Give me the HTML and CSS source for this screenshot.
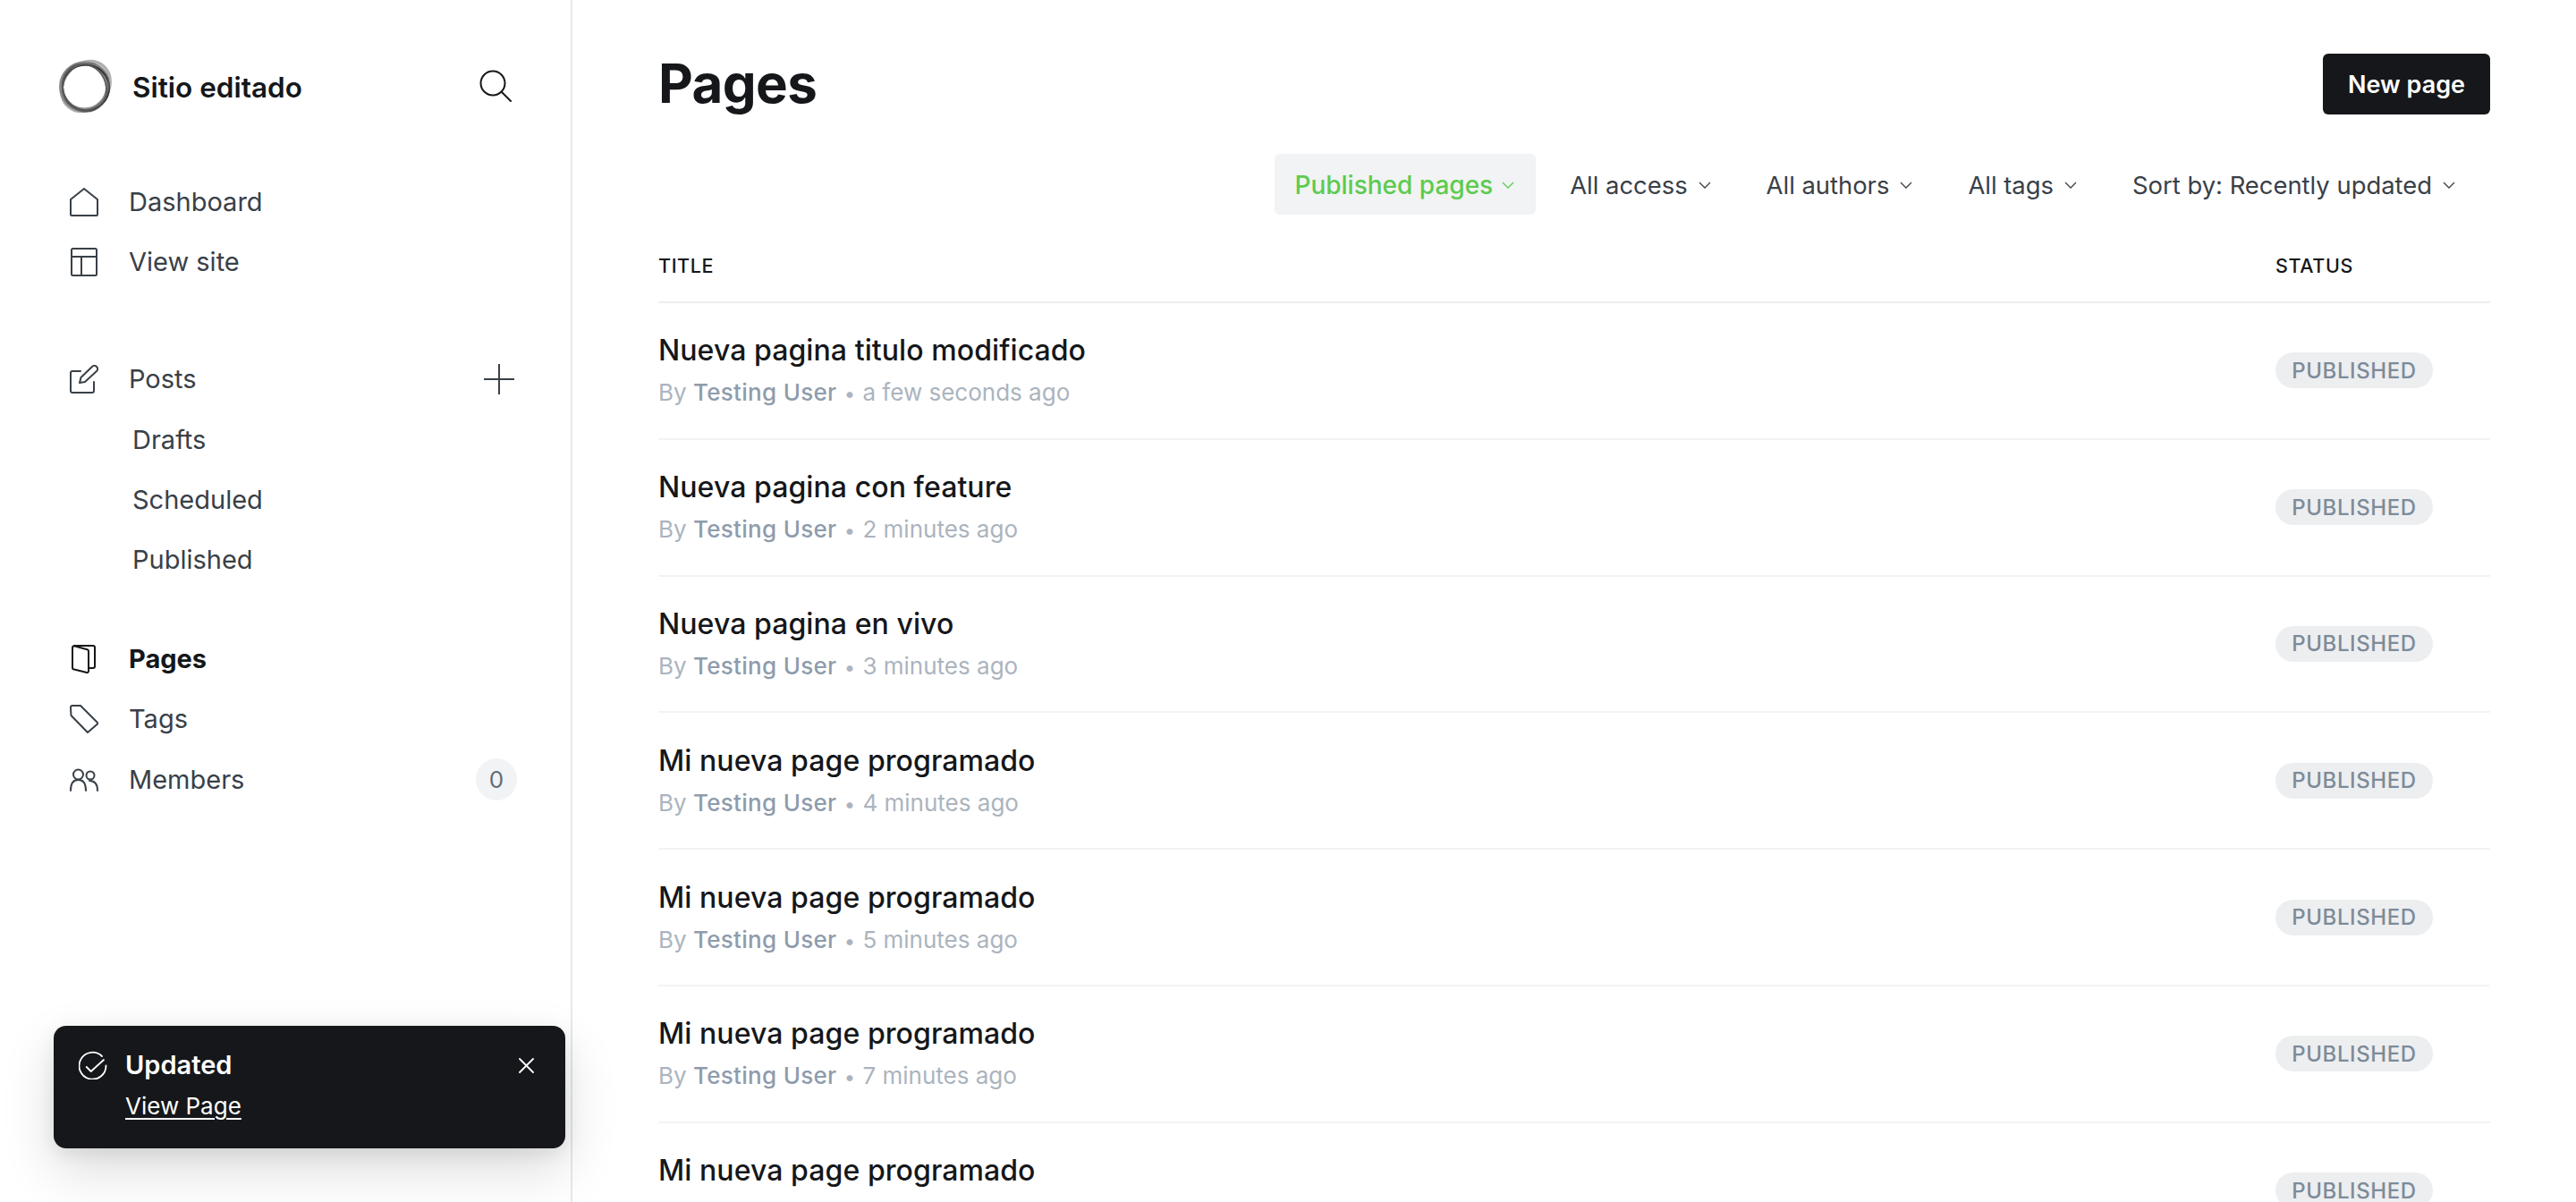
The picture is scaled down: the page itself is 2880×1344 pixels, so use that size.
FILE: index.html
```html
<!DOCTYPE html>
<html lang="en">
<head>
<meta charset="utf-8">
<title>Pages</title>
<link rel="stylesheet" href="styles.css">
</head>
<body>
<div class="app">
  <aside class="sidebar">
    <div class="brand">
      <svg class="logo" viewBox="0 0 60 60" fill="none"><ellipse cx="31" cy="30.500" rx="30" ry="25" stroke-width="3.500" stroke="#b0b0b0" transform="rotate(-50 31 30.500)"/><circle cx="29.500" cy="31" r="26" stroke-width="5" stroke="#8a8a8a"/><ellipse cx="31" cy="32" rx="26" ry="25.500" stroke-width="2" stroke="#333"/><ellipse cx="29.500" cy="32" rx="27" ry="24" stroke-width="2" stroke="#555" opacity=".85" transform="rotate(65 29.500 32)"/><ellipse cx="31" cy="31" rx="27.500" ry="24.500" stroke-width="1.500" stroke="#666" opacity=".7" transform="rotate(-50 31 31)"/></svg>
      <span class="brand-name">Sitio editado</span>
      <svg class="search" viewBox="0 0 36 36" fill="none" stroke="#15171a" stroke-width="2" stroke-linecap="round"><circle cx="15" cy="15" r="13.500"/><path d="M25 25l10 10"/></svg>
    </div>
    <nav class="nav nav-first">
      <a class="item"><svg class="ico" viewBox="0 0 32 32" fill="none" stroke="#394047" stroke-width="2" stroke-linejoin="round"><path d="M1 13L16 1l15 12v17a1 1 0 0 1-1 1H2a1 1 0 0 1-1-1z"/></svg>Dashboard</a>
      <a class="item"><svg class="ico" viewBox="0 0 32 32" fill="none" stroke="#394047" stroke-width="2" stroke-linejoin="round"><rect x="2" y="1" width="28" height="30" rx="1.500"/><path d="M2 10h28M13 10v21"/></svg>View site</a>
    </nav>
    <nav class="nav">
      <div class="item"><svg class="ico" viewBox="0 0 32 32" fill="none" stroke="#394047" stroke-width="2" stroke-linejoin="round" stroke-linecap="round"><path d="M12 7H3a2 2 0 0 0-2 2v20a2 2 0 0 0 2 2h22a2 2 0 0 0 2-2V19"/><path d="M11 20l1.500-6L25 2c1.500-1.500 3.500-1.500 5 0s1.500 3.500 0 5L17 19z"/></svg>Posts<svg class="plus" viewBox="0 0 34 34" fill="none" stroke="#394047" stroke-width="2" stroke-linecap="round"><path d="M17 0v34M0 17h34"/></svg></div>
      <a class="item sub">Drafts</a>
      <a class="item sub">Scheduled</a>
      <a class="item sub">Published</a>
    </nav>
    <nav class="nav nav-last">
      <a class="item current"><svg class="ico" viewBox="0 0 32 32" fill="none" stroke="#15171a" stroke-width="2" stroke-linejoin="round" stroke-linecap="round"><path d="M5 1h21a2 2 0 0 1 2 2v21a2 2 0 0 1-2 2h-5"/><path d="M5 1.200l14.500 4a2 2 0 0 1 1.500 2v22.300a1.500 1.500 0 0 1-2 1.500L5 27.500a2 2 0 0 1-2-2V3a2 2 0 0 1 2-1.800z"/></svg>Pages</a>
      <a class="item"><svg class="ico" viewBox="0 0 32 32" fill="none" stroke="#394047" stroke-width="2" stroke-linejoin="round"><path d="M1 3a2 2 0 0 1 2-2h9l19 19a1 1 0 0 1 0 1.500L20 31 1.500 12z"/></svg>Tags</a>
      <a class="item item-members"><svg class="ico" viewBox="0 0 32 32" fill="none" stroke="#394047" stroke-width="2" stroke-linecap="round"><circle cx="9.500" cy="10" r="5.500"/><path d="M1 28c0-8 3-12 8.500-12s8.500 4 8.500 12"/><circle cx="23" cy="11" r="4.500"/><path d="M22 17c6 0 9 4 9 11"/></svg>Members<span class="count">0</span></a>
    </nav>
  </aside>
  <main class="main">
    <header class="top">
      <h1 class="title">Pages</h1>
      <button class="new">New page</button>
    </header>
    <div class="filters">
      <button class="filter active">Published pages<svg class="chev" viewBox="0 0 14 8" fill="none" stroke="currentColor" stroke-width="1.300"><path d="M1 1l6 6 6-6"/></svg></button>
      <button class="filter">All access<svg class="chev" viewBox="0 0 14 8" fill="none" stroke="currentColor" stroke-width="1.300"><path d="M1 1l6 6 6-6"/></svg></button>
      <button class="filter">All authors<svg class="chev" viewBox="0 0 14 8" fill="none" stroke="currentColor" stroke-width="1.300"><path d="M1 1l6 6 6-6"/></svg></button>
      <button class="filter">All tags<svg class="chev" viewBox="0 0 14 8" fill="none" stroke="currentColor" stroke-width="1.300"><path d="M1 1l6 6 6-6"/></svg></button>
      <button class="filter">Sort by: Recently updated<svg class="chev" viewBox="0 0 14 8" fill="none" stroke="currentColor" stroke-width="1.300"><path d="M1 1l6 6 6-6"/></svg></button>
    </div>
    <div class="thead"><span class="col-title">TITLE</span><span class="col-status">STATUS</span></div>
    <div class="row">
      <div class="col-title"><div class="row-title">Nueva pagina titulo modificado</div><div class="meta">By <b>Testing User</b> <i>•</i> a few seconds ago</div></div>
      <div class="col-status"><span class="badge">PUBLISHED</span></div>
    </div>
    <div class="row">
      <div class="col-title"><div class="row-title">Nueva pagina con feature</div><div class="meta">By <b>Testing User</b> <i>•</i> 2 minutes ago</div></div>
      <div class="col-status"><span class="badge">PUBLISHED</span></div>
    </div>
    <div class="row">
      <div class="col-title"><div class="row-title">Nueva pagina en vivo</div><div class="meta">By <b>Testing User</b> <i>•</i> 3 minutes ago</div></div>
      <div class="col-status"><span class="badge">PUBLISHED</span></div>
    </div>
    <div class="row">
      <div class="col-title"><div class="row-title">Mi nueva page programado</div><div class="meta">By <b>Testing User</b> <i>•</i> 4 minutes ago</div></div>
      <div class="col-status"><span class="badge">PUBLISHED</span></div>
    </div>
    <div class="row">
      <div class="col-title"><div class="row-title">Mi nueva page programado</div><div class="meta">By <b>Testing User</b> <i>•</i> 5 minutes ago</div></div>
      <div class="col-status"><span class="badge">PUBLISHED</span></div>
    </div>
    <div class="row">
      <div class="col-title"><div class="row-title">Mi nueva page programado</div><div class="meta">By <b>Testing User</b> <i>•</i> 7 minutes ago</div></div>
      <div class="col-status"><span class="badge">PUBLISHED</span></div>
    </div>
    <div class="row">
      <div class="col-title"><div class="row-title">Mi nueva page programado</div><div class="meta">By <b>Testing User</b> <i>•</i> 8 minutes ago</div></div>
      <div class="col-status"><span class="badge">PUBLISHED</span></div>
    </div>
  </main>
  <div class="toast">
    <svg class="toast-ico" viewBox="0 0 32 32" fill="none" stroke="#fff" stroke-width="1.800" stroke-linecap="round" stroke-linejoin="round"><path d="M26 6A15 15 0 1 0 30.500 16.500"/><path d="M8.700 18l5 5L28 10"/></svg>
    <div class="toast-body"><div class="toast-title">Updated</div><a class="toast-link">View Page</a></div>
    <svg class="toast-x" viewBox="0 0 17 17" fill="none" stroke="#fff" stroke-width="1.800" stroke-linecap="round"><path d="M1 1l15 15M16 1L1 16"/></svg>
  </div>
</div>
</body>
</html>
```

FILE: styles.css
```css
* { box-sizing: border-box; }
html, body { margin: 0; height: 100%; overflow: hidden; background: #fff; }
body { font-family: Inter, "Noto Sans", sans-serif; color: #15171a; }
.app { display: flex; height: 1344px; overflow: hidden; position: relative; }

.sidebar { width: 640px; flex: none; border-right: 2px solid #e6e8ea; padding: 66px 64px 0 65px; }
.brand { display: flex; align-items: center; height: 60px; }
.logo { width: 60px; height: 60px; flex: none; overflow: visible; }
.brand-name { margin-left: 23px; font-size: 31.500px; font-weight: 600; padding-top: 2px; }
.search { width: 36px; height: 36px; margin-left: auto; margin-right: 2px; }

.nav { margin-top: 44px; }
.nav-first { margin-top: 66px; }
.nav-first + .nav { margin-top: 64px; }
.nav-last { margin-top: 44px; }
.item { display: flex; align-items: center; height: 67px; font-size: 29px; color: #394047; padding-left: 13px; }
.item:not(.sub) + .sub { margin-top: 1px; }
.item-members { margin-top: 1px; }
.ico { width: 32px; height: 32px; flex: none; margin-right: 34px; }
.sub { padding-left: 83px; }
.current { font-weight: 700; color: #15171a; }
.plus { width: 34px; height: 34px; margin-left: auto; margin-right: -1px; }
.count { margin-left: auto; width: 46px; height: 47px; border-radius: 50%; background: #f1f3f4; font-size: 26px; color: #626d79; display: flex; align-items: center; justify-content: center; margin-right: -4px; }

.main { flex: 1; padding: 0 96px; min-width: 0; }
.top { display: flex; justify-content: space-between; align-items: flex-start; padding-top: 60px; height: 172px; }
.title { margin: 0; font-size: 60px; line-height: 66px; font-weight: 700; letter-spacing: -0.6px; }
.new { width: 187px; height: 68px; border: 0; border-radius: 6px; background: #15171a; color: #fff; font: 600 27px Inter, sans-serif; padding: 0; }

.filters { display: flex; justify-content: flex-end; gap: 14px; padding-right: 15px; }
.filter { height: 68px; border: 0; border-radius: 6px; background: transparent; color: #394047; font: 400 27.400px Inter, sans-serif; padding: 2px 24px 0; display: flex; align-items: center; }
.filter.active { background: #f1f3f4; color: #5dcb4f; font-weight: 500; font-size: 28px; padding-left: 22px; }
.filter.active .chev { margin-left: 10px; }
.chev { width: 14px; height: 8px; margin-left: 12px; }

.thead { display: flex; align-items: center; height: 99px; padding-top: 16px; border-bottom: 2px solid #ebeef0; font-size: 21.500px; letter-spacing: 0.6px; font-weight: 500; color: #15171a; }
.col-title { flex: 1; min-width: 0; }
.row .col-title { margin-top: -2px; }
.col-status { width: 240px; flex: none; }
.row { display: flex; align-items: center; height: 152.800px; border-bottom: 2px solid #f1f3f4; }
.row-title { font-size: 32px; line-height: 42px; font-weight: 500; letter-spacing: 0.08px; color: #15171a; padding-top: 2px; }
.meta { font-size: 26px; line-height: 34px; margin-top: 9px; color: #abb4be; }
.meta b { font-weight: 500; color: #8e9cac; letter-spacing: 0.3px; }
.meta i { font-style: normal; margin: 0 1px; font-size: 22px; }
.badge { display: inline-flex; align-items: center; height: 40px; width: 176px; justify-content: center; border-radius: 20px; background: #eceef0; color: #7c8b9a; font-size: 24px; font-weight: 500; letter-spacing: 0.6px; }

.toast { position: absolute; left: 60px; top: 1147px; width: 572px; height: 137px; border-radius: 14px; background: #15171a; color: #fff; box-shadow: 0 24px 60px rgba(0,0,0,.14), 0 6px 20px rgba(0,0,0,.08); display: flex; padding: 28px 35px 0 28px; }
.toast-ico { width: 32px; height: 32px; flex: none; margin-right: 20px; }
.toast-body { flex: 1; }
.toast-title { font-size: 29px; font-weight: 600; line-height: 32px; }
.toast-link { display: inline-block; margin-top: 14px; font-size: 26px; line-height: 32px; text-decoration: underline; text-underline-offset: 4px; }
.toast-x { width: 17px; height: 17px; margin-top: 8px; }
```
